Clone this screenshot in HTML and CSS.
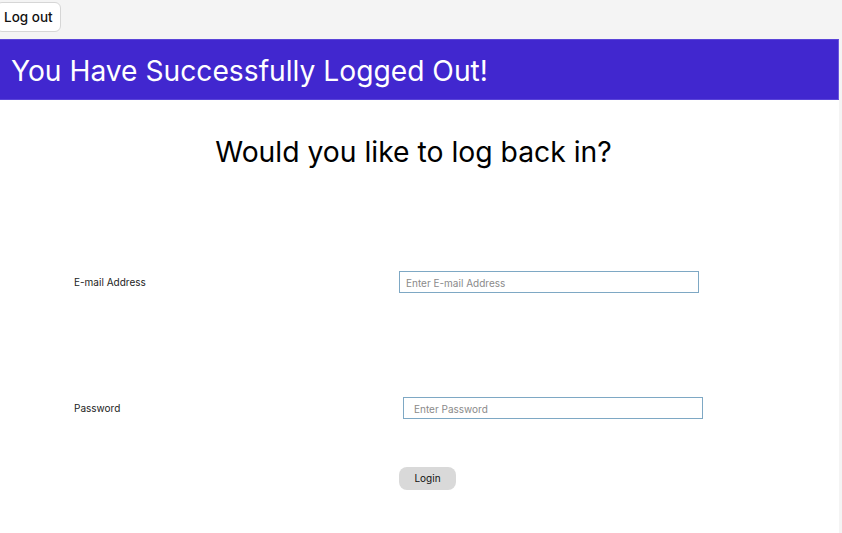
FILE: index.html
```html
<!DOCTYPE html>
<html>
<head>
<meta charset="utf-8">
<link rel="stylesheet" href="styles.css">
</head>
<body>
<div class="topbar">
  <button class="logout">Log out</button>
</div>
<div class="page">
  <header class="banner">You Have Successfully Logged Out!</header>
  <main class="content">
    <h1 class="question">Would you like to log back in?</h1>
    <form class="form">
      <div class="row row-email">
        <label class="label">E-mail Address</label>
        <input class="field" type="text" placeholder="Enter E-mail Address">
      </div>
      <div class="row row-pass">
        <label class="label">Password</label>
        <input class="field" type="password" placeholder="Enter Password">
      </div>
      <div class="actions">
        <button type="button" class="login">Login</button>
      </div>
    </form>
  </main>
</div>
</body>
</html>
```
FILE: styles.css
```css
html, body {
  margin: 0;
  padding: 0;
  background: #f4f4f4;
  font-family: Inter, "Noto Sans", sans-serif;
  height: 100%;
}
.topbar {
  height: 39px;
  display: flex;
  align-items: flex-start;
  padding-top: 2px;
  box-sizing: border-box;
}
.logout {
  margin-left: -4px;
  height: 30px;
  padding: 0 7px 0 7px;
  font-family: Inter, sans-serif;
  font-size: 13.5px;
  font-weight: 500;
  color: #111;
  background: #fff;
  border: 1px solid #d6d6d6;
  border-radius: 6px;
}
.page {
  width: 839px;
  background: #fff;
  min-height: 494px;
}
.banner {
  background: #4127cf;
  color: #fff;
  height: 61px;
  box-sizing: border-box;
  padding: 14px 0 0 11px;
  font-size: 28.2px;
  font-weight: 400;
  border-top: 1px solid #5a44d8;
  border-right: 1px solid #6a57de;
  border-bottom: 1px solid #5a44d8;
}
.content {
  padding-top: 35px;
}
.question {
  margin: 0;
  text-align: center;
  font-size: 28.3px;
  font-weight: 400;
  color: #000;
  padding-right: 12px;
}
.form {
  display: flex;
  flex-direction: column;
  padding-top: 102px;
}
.row {
  display: grid;
  grid-template-columns: 325px 300px;
  padding-left: 74px;
  align-items: center;
}
.row-pass {
  grid-template-columns: 329px 300px;
  margin-top: 104px;
}
.label {
  font-size: 10px;
  color: #222;
}
.field {
  width: 300px;
  height: 22px;
  box-sizing: border-box;
  border: 1px solid #7ea8c4;
  padding: 2px 6px 0;
  font-family: Inter, sans-serif;
  font-size: 10px;
  color: #333;
  outline: none;
}
.row-pass .field {
  padding-left: 10px;
}
.field::placeholder {
  color: #8a8a8a;
}
.actions {
  padding-left: 399px;
  margin-top: 47px;
}
.login {
  width: 57px;
  height: 23px;
  border: none;
  border-radius: 8px;
  background: #d9d9d9;
  font-family: Inter, sans-serif;
  font-size: 10px;
  color: #111;
}
```
